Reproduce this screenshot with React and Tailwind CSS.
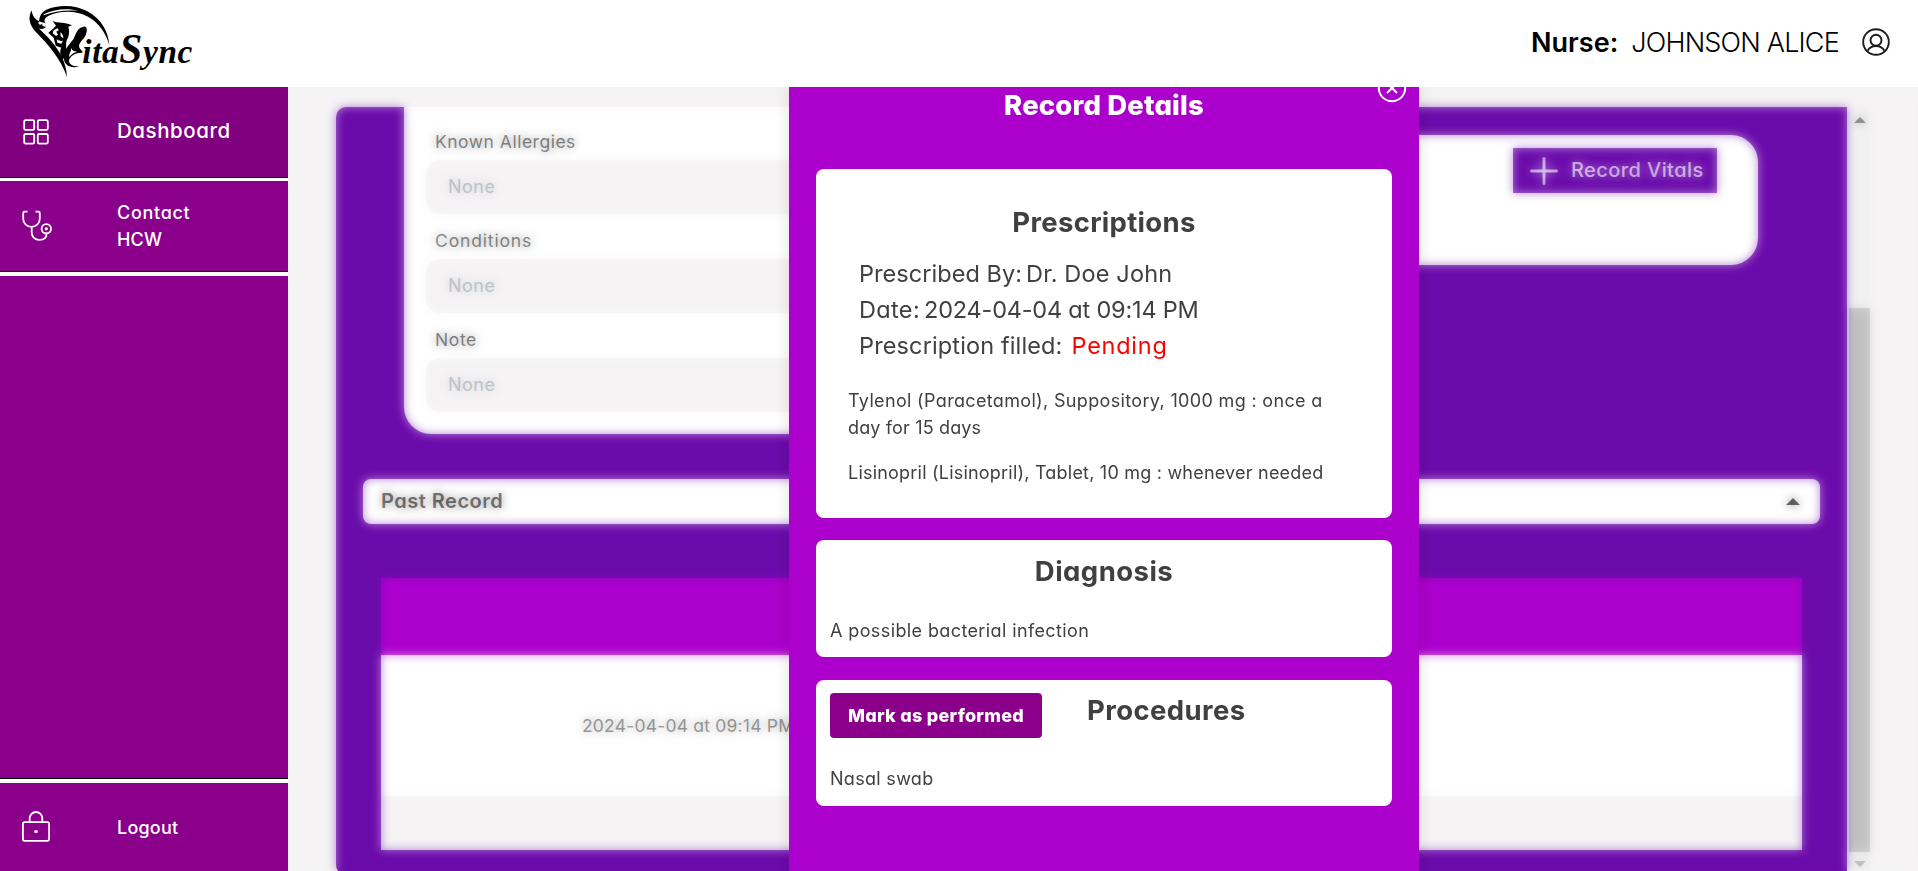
import React from "react";

const TEXT = "text-[#404040]";

function Logo() {
  return (
    <svg className="h-[84px] w-[220px]" viewBox="0 0 660 252" role="img" aria-label="VitaSync">
      <g fill="#000">
        <path d="M95 31 C84 52 87 72 104 92 C140 128 183 176 201 231 C199 186 178 151 153 122 C140 107 125 94 116 84 C121 88 132 88 138 80 C129 80 125 76 127 71 C120 78 111 72 118 64 C105 59 96 46 95 31Z" />
        <path d="M117 64 C119 47 125 36 139 29 C174 14 224 13 262 34 C303 57 325 93 328 136 C320 103 298 69 264 50 C228 30 178 32 146 47 C136 52 129 60 137 70 C129 67 122 67 117 64Z" />
        <path d="M131 43 C165 26 207 24 236 33 C205 29 162 33 131 46Z" fill="#fff" />
        <path d="M158 63 C174 70 194 66 216 76 L205 80 C210 96 206 111 200 121 C197 133 198 147 201 155 L188 181 C179 164 179 151 184 143 L167 137 L161 113 L145 98 L161 85 L168 77Z" />
        <path d="M161 91 L172 85 L177 90 L169 95 L174 104 L168 108 L158 100Z M181 97 C188 101 190 108 190 115 L182 109Z M170 118 C178 122 184 124 189 122 L184 131 L172 128Z" fill="#fff" />
        <path d="M193 184 C186 153 206 137 220 118 C228 103 230 84 251 80 C263 78 262 95 257 106 C251 118 237 128 237 139 C240 152 249 151 247 158 C229 157 208 168 207 182 C208 195 222 200 238 199 C218 206 199 200 193 184Z" />
        <path d="M213 151 C210 158 207 164 207 172 C214 162 224 157 231 155 C222 154 216 151 213 143Z" fill="#fff" />
      </g>
      <text
        x="247"
        y="190"
        fontFamily="'Liberation Serif', serif"
        fontWeight="700"
        fontStyle="italic"
        fontSize="100"
        textLength="330"
        lengthAdjust="spacing"
      >
        ita<tspan fontSize="124">S</tspan>ync
      </text>
    </svg>
  );
}

function UserIcon() {
  return (
    <svg className="size-[30px]" viewBox="0 0 30 30" fill="none" stroke="#1c1c1c" strokeWidth="1.9">
      <circle cx="15" cy="15" r="12.8" />
      <circle cx="15" cy="13.3" r="5.5" />
      <path d="M6.4 24.2c1.6-3.3 4.8-5.2 8.6-5.2s7 1.9 8.6 5.2" />
    </svg>
  );
}

function GridIcon() {
  return (
    <svg className="size-[32px]" viewBox="0 0 32 32" fill="none" stroke="#fff" strokeWidth="1.8">
      <rect x="4.2" y="4.2" width="10" height="9.6" rx="1.3" />
      <rect x="17.8" y="4.2" width="10" height="9.6" rx="1.3" />
      <rect x="4.2" y="18" width="10" height="9.6" rx="1.3" />
      <rect x="17.8" y="18" width="10" height="9.6" rx="1.3" />
    </svg>
  );
}

function StethoscopeIcon() {
  return (
    <svg className="size-[32px]" viewBox="0 0 32 32" fill="none" stroke="#fff" strokeWidth="1.8" strokeLinecap="round">
      <path d="M6.8 1.700H4.2Q3.200 1.700 3.200 3.700V8.700C3.200 13.700 7 16.900 11.400 16.900S19.800 13.700 19.800 8.700V3.700Q19.800 1.700 18.800 1.700H16.200" />
      <path d="M11.7 17V22.500c0 4.600 3.400 7.400 7.600 7.400 4.500 0 7.300-2.500 7.300-6.400" />
      <circle cx="26.3" cy="18.8" r="4.7" />
      <circle cx="26.3" cy="18.8" r="1.6" fill="#fff" stroke="none" />
    </svg>
  );
}

function LockIcon() {
  return (
    <svg className="size-[32px]" viewBox="0 0 32 32" fill="none" stroke="#fff" strokeWidth="1.8">
      <rect x="2.9" y="11.2" width="26.2" height="18.6" rx="1.8" />
      <path d="M9.7 11V7.3a6.3 6.3 0 0 1 12.6 0V11" />
      <rect x="14.3" y="19.2" width="3.4" height="2.8" rx=".8" fill="#fff" stroke="none" />
    </svg>
  );
}

function Field({ label, labelClass }) {
  return (
    <div className="flex flex-col">
      <div className="h-[37px] pl-[9px] text-[17.5px] leading-[37px] text-[#303030]">
        <span className={labelClass}>{label}</span>
      </div>
      <div className="mb-[8px] h-[54px] rounded-[14px] bg-[#f5f3f4] pl-[22px] text-[18px] leading-[54px] text-[#9ca3af]">
        <span className="tracking-[0.5px]">None</span>
      </div>
    </div>
  );
}

function Header() {
  return (
    <header className="relative z-20 flex h-[87px] shrink-0 items-start justify-between bg-white">
      <Logo />
      <div className="flex h-[84px] items-center pr-[27px] text-[27px] text-black">
        <span className="mt-[3px] font-semibold">Nurse:</span>
        <span className="ml-[13px] mt-[3px] font-light tracking-[-0.8px]">JOHNSON ALICE</span>
        <span className="ml-[22px]">
          <UserIcon />
        </span>
      </div>
    </header>
  );
}

function Sidebar() {
  return (
    <aside className="flex w-[288px] shrink-0 flex-col bg-white text-[18px] font-medium text-white">
      <div className="flex h-[91px] items-center border-b border-black bg-[#800080] pl-[20px]">
        <GridIcon />
        <span className="mb-[2px] ml-[65px] text-[20.5px] tracking-[0.55px]">Dashboard</span>
      </div>
      <div className="mt-[3px] flex h-[91px] items-center border-b border-black bg-[#8b008b] pl-[20px]">
        <StethoscopeIcon />
        <span className="ml-[65px] leading-[27px]">
          <span className="tracking-[0.7px]">Contact</span>
          <br />
          <span className="tracking-[0.2px]">HCW</span>
        </span>
      </div>
      <div className="mt-[4px] h-[503px] border-b border-black bg-[#8b008b]" />
      <div className="mt-[4px] flex h-[88px] items-center bg-[#8b008b] pl-[20px]">
        <LockIcon />
        <span className="ml-[65px] tracking-[0.2px]">Logout</span>
      </div>
    </aside>
  );
}

function PatientPanel() {
  return (
    <div className="ml-[48px] mt-[20px] flex h-[768px] w-[1534px] overflow-hidden rounded-l-[10px] bg-[#f1f1f1]">
      <div className="flex w-[1511px] flex-col bg-[#6a0bab]">
        <div className="flex h-[327px] items-start justify-between pl-[68px] pr-[89px]">
          <div className="h-[327px] w-[560px] rounded-b-[27px] bg-white px-[22px] pt-[16px]">
            <Field label="Known Allergies" labelClass="tracking-[0.5px]" />
            <Field label="Conditions" labelClass="tracking-[0.85px]" />
            <Field label="Note" labelClass="tracking-[0.6px]" />
          </div>
          <div className="mt-[28px] flex h-[130px] w-[520px] justify-end rounded-[27px] bg-white pr-[41px] pt-[13px]">
            <button className="flex h-[45px] w-[204px] items-center bg-[#6a0bab] pl-[17px] text-white">
              <svg className="mt-px size-[28px]" viewBox="0 0 28 28" stroke="#fff" strokeWidth="3" strokeLinecap="round">
                <path d="M1.5 14h25M14 1.5v25" />
              </svg>
              <span className="mb-[2px] ml-[13px] whitespace-nowrap text-[20px] font-medium tracking-[0.42px]">Record Vitals</span>
            </button>
          </div>
        </div>
        <div className="ml-[27px] mt-[45px] flex h-[45px] w-[1457px] items-center justify-between rounded-[8px] bg-white pl-[18px] pr-[20px]">
          <span className="mb-[2px] text-[20px] font-semibold tracking-[0.5px] text-[#202020]">Past Record</span>
          <svg className="h-[7px] w-[14px]" viewBox="0 0 14 7">
            <path d="M7 0l7 7H0z" fill="#000" />
          </svg>
        </div>
        <div className="ml-[45px] mt-[54px] flex w-[1421px] flex-col">
          <div className="h-[77px] bg-[#ac00cc]" />
          <div className="flex h-[141px] items-center bg-white pl-[201px] pt-[2px] text-[17.5px] text-[#505050]">
            <span className="tracking-[0.2px]">2024-04-04 at 09:14 PM</span>
          </div>
          <div className="h-[54px] bg-[#f5f3f4]" />
        </div>
      </div>
      <div className="flex w-[23px] flex-col items-center pl-[2px] pt-[10px]">
        <svg className="h-[6px] w-[12px]" viewBox="0 0 12 6">
          <path d="M6 0l6 6H0z" fill="#505050" />
        </svg>
        <div className="mt-[185px] h-[544px] w-[21px] bg-[#c1c1c1]" />
        <svg className="mt-[9px] h-[6px] w-[12px]" viewBox="0 0 12 6">
          <path d="M0 0h12L6 6z" fill="#a3a3a3" />
        </svg>
      </div>
    </div>
  );
}

function RecordModal() {
  return (
    <div className={`absolute left-[501px] top-0 flex h-[800px] w-[630px] flex-col bg-[#ac00cc] px-[27px] shadow-[0_0_15px_rgba(0,0,0,0.12)] ${TEXT}`}>
      <div className="h-[82px] text-center text-[27.5px] font-extrabold leading-[37px] text-white">
        <span className="tracking-[0.15px]">Record Details</span>
      </div>
      <svg className="absolute right-[12px] top-[-14px] size-[30px]" viewBox="0 0 30 30" fill="none" stroke="#fff" strokeWidth="2">
        <circle cx="15" cy="15" r="13.2" />
        <path d="M10 10l10 10M20 10l-10 10" />
      </svg>

      <section className="h-[349px] rounded-[8px] bg-white pt-[35px]">
        <h2 className="text-center text-[27.5px] font-bold leading-[36px] tracking-[0.3px]">Prescriptions</h2>
        <div className="mt-[16px] pl-[43px] text-[23.5px] leading-[36px]">
          <p className="flex">
            <span className="tracking-[0.05px]">Prescribed By:</span>
            <span className="ml-[4px] tracking-[0.15px]">Dr. Doe John</span>
          </p>
          <p className="flex">
            <span className="tracking-[0.35px]">Date:</span>
            <span className="ml-[4px] tracking-[-0.2px]">2024-04-04 at 09:14 PM</span>
          </p>
          <p className="flex">
            <span className="tracking-[0.13px]">Prescription filled:</span>
            <span className="ml-[9px] tracking-[0.75px] text-[#ff0000]">Pending</span>
          </p>
        </div>
        <div className="mt-[23px] whitespace-nowrap pl-[32px] text-[18px] leading-[27px]">
          <p>
            <span className="tracking-[0.34px]">Tylenol (Paracetamol), Suppository, 1000 mg : once a</span>
            <br />
            <span className="tracking-[0.15px]">day for 15 days</span>
          </p>
          <p className="mt-[18px] tracking-[0.21px]">Lisinopril (Lisinopril), Tablet, 10 mg : whenever needed</p>
        </div>
      </section>

      <section className="mt-[22px] h-[117px] rounded-[8px] bg-white pt-[13px]">
        <h2 className="text-center text-[27.5px] font-bold leading-[36px] tracking-[0.45px]">Diagnosis</h2>
        <p className="mt-[28px] pl-[14px] text-[18px] leading-[27px] tracking-[0.39px]">A possible bacterial infection</p>
      </section>

      <section className="mt-[23px] h-[126px] rounded-[8px] bg-white pl-[14px] pt-[13px]">
        <div className="flex h-[45px]">
          <button className="h-[45px] w-[212px] rounded-[4px] bg-[#8b008b] pb-px text-[18px] font-extrabold tracking-[0.25px] text-white">
            Mark as performed
          </button>
          <h2 className="ml-[45px] text-[27.5px] font-bold leading-[35px] tracking-[0.4px]">Procedures</h2>
        </div>
        <p className="mt-[27px] text-[18px] leading-[27px] tracking-[0.3px]">Nasal swab</p>
      </section>
    </div>
  );
}

export default function App() {
  return (
    <div className="flex h-[871px] w-[1918px] flex-col overflow-hidden bg-[#f5f3f4] font-[Inter,sans-serif] [font-feature-settings:'cv11']">
      <Header />
      <div className="flex h-[784px]">
        <Sidebar />
        <main className="relative h-[784px] w-[1630px] overflow-hidden bg-[#f5f3f4]">
          <PatientPanel />
          <div className="absolute inset-0 opacity-50 backdrop-blur-[5px]" />
          <RecordModal />
        </main>
      </div>
    </div>
  );
}
